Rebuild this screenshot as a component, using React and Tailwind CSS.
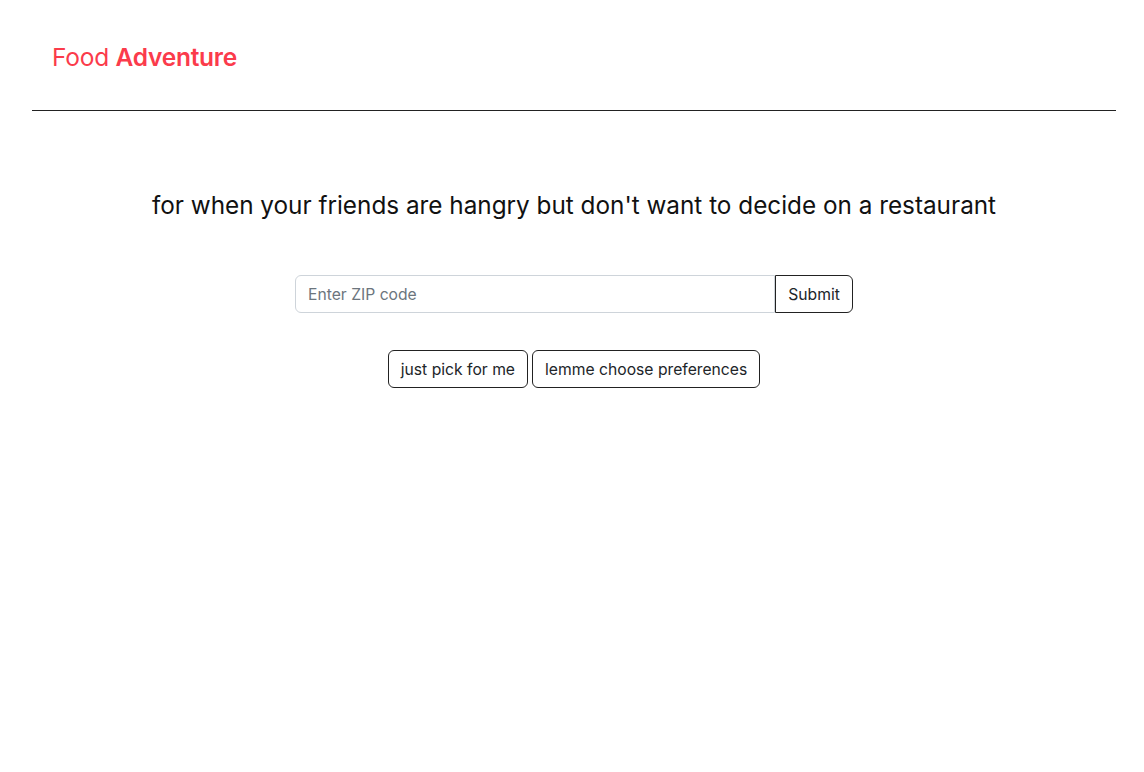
export default function App() {
  return (
    <div className="min-h-screen bg-white" style={{ fontFamily: "Inter, 'Noto Sans', sans-serif" }}>
      <div className="ml-8 mr-7">
        <header className="h-[111px] flex items-center px-5 border-b border-[#222]">
          <h1 className="text-[24.5px] tracking-[-0.01em] text-[#fb3b4b] mt-[4px]">
            Food <span className="font-semibold">Adventure</span>
          </h1>
        </header>

        <main className="flex flex-col items-center">
          <p className="mt-[76px] text-[24.3px] text-[#111]">
            for when your friends are hangry but don't want to decide on a restaurant
          </p>

          <form className="mt-[52px] flex" onSubmit={(e) => e.preventDefault()}>
            <input
              type="text"
              placeholder="Enter ZIP code"
              className="w-[480px] h-[38px] px-3 text-[15.7px] rounded-l-md border border-[#ced4da] placeholder:text-[#6c757d] outline-none"
            />
            <button className="h-[38px] w-[78px] text-[15.7px] text-[#212529] border border-[#222] rounded-r-md">
              Submit
            </button>
          </form>

          <div className="mt-[37px] flex gap-1">
            <button className="h-[38px] px-3 text-[15.7px] text-[#212529] border border-[#222] rounded-md">
              just pick for me
            </button>
            <button className="h-[38px] px-3 text-[15.7px] text-[#212529] border border-[#222] rounded-md">
              lemme choose preferences
            </button>
          </div>
        </main>
      </div>
    </div>
  );
}
